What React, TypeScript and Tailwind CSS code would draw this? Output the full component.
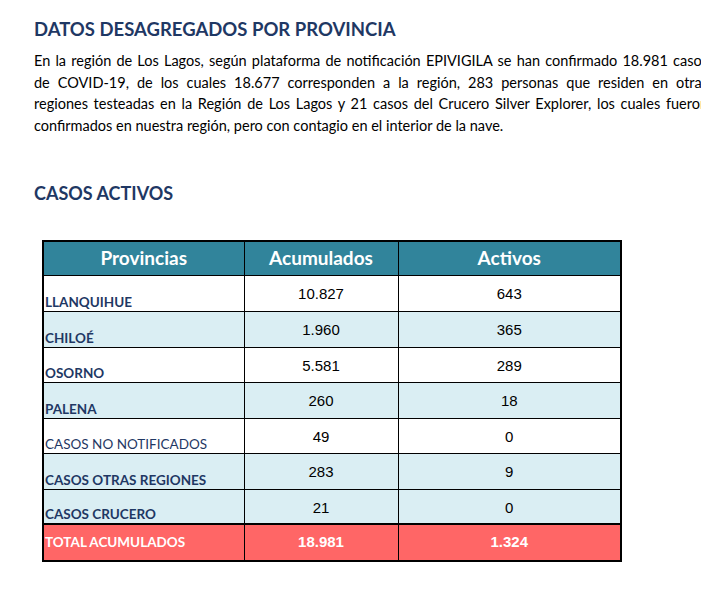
const rows = [
  { name: 'LLANQUIHUE', acc: '10.827', act: '643', bg: 'bg-white', bold: true, h: 'h-[36px]' },
  { name: 'CHILOÉ', acc: '1.960', act: '365', bg: 'bg-[#daeef3]', bold: true, h: 'h-[36px]' },
  { name: 'OSORNO', acc: '5.581', act: '289', bg: 'bg-white', bold: true, h: 'h-[35px]' },
  { name: 'PALENA', acc: '260', act: '18', bg: 'bg-[#daeef3]', bold: true, h: 'h-[36px]' },
  { name: 'CASOS NO NOTIFICADOS', acc: '49', act: '0', bg: 'bg-white', bold: false, h: 'h-[35px]' },
  { name: 'CASOS OTRAS REGIONES', acc: '283', act: '9', bg: 'bg-[#daeef3]', bold: true, h: 'h-[36px]' },
  { name: 'CASOS CRUCERO', acc: '21', act: '0', bg: 'bg-[#daeef3]', bold: true, h: 'h-[35px]' },
];

const lines = [
  'En la región de Los Lagos, según plataforma de notificación EPIVIGILA se han confirmado 18.981 casos',
  'de COVID-19, de los cuales 18.677 corresponden a la región, 283 personas que residen en otras',
  'regiones testeadas en la Región de Los Lagos y 21 casos del Crucero Silver Explorer, los cuales fueron',
];

export default function App() {
  return (
    <div className="w-[701px] h-[603px] overflow-hidden bg-white font-['Lato','Open_Sans',sans-serif]">
      <div className="pl-[34px] pt-[16px]">
        <h1 className="text-[18.5px] leading-[26px] font-bold text-[#1f3864]">DATOS DESAGREGADOS POR PROVINCIA</h1>
        <div className="mt-[8px] w-[674px] text-[14.5px] leading-[21.5px] text-black">
          {lines.map((l) => (
            <p key={l} className="text-justify whitespace-nowrap [text-align-last:justify]">{l}</p>
          ))}
          <p>confirmados en nuestra región, pero con contagio en el interior de la nave.</p>
        </div>
        <h2 className="mt-[45px] text-[18px] leading-[24px] font-bold text-[#1f3864]">CASOS ACTIVOS</h2>
      </div>

      <div className="pl-[42px] pt-[35px]">
        <table className="w-[578px] border-collapse border-2 border-black table-fixed">
          <colgroup>
            <col className="w-[201px]" />
            <col className="w-[154px]" />
            <col className="w-[223px]" />
          </colgroup>
          <thead>
            <tr className="h-[34px] bg-[#31849b] text-white text-[19px]">
              <th className="border border-black font-bold">Provincias</th>
              <th className="border border-black font-bold">Acumulados</th>
              <th className="border border-black font-bold">Activos</th>
            </tr>
          </thead>
          <tbody>
            {rows.map((r) => (
              <tr key={r.name} className={`${r.h} ${r.bg}`}>
                <td className={`border border-black align-bottom pl-px pb-[1px] text-[13.5px] leading-[16px] text-[#1f3864] ${r.bold ? 'font-bold' : 'font-normal'}`}>
                  {r.name}
                </td>
                <td className="border border-black align-top pt-[9px] text-center font-['Liberation_Sans',Arial,sans-serif] text-[15px] leading-[17px] text-black">
                  {r.acc}
                </td>
                <td className="border border-black align-top pt-[9px] text-center font-['Liberation_Sans',Arial,sans-serif] text-[15px] leading-[17px] text-black">
                  {r.act}
                </td>
              </tr>
            ))}
            <tr className="h-[37px] bg-[#ff6666] text-white">
              <td className="border border-black border-t-2 pl-px text-[13.5px] font-bold">TOTAL ACUMULADOS</td>
              <td className="border border-black border-t-2 text-center font-['Liberation_Sans',Arial,sans-serif] text-[15px] font-bold">18.981</td>
              <td className="border border-black border-t-2 text-center font-['Liberation_Sans',Arial,sans-serif] text-[15px] font-bold">1.324</td>
            </tr>
          </tbody>
        </table>
      </div>
    </div>
  );
}
